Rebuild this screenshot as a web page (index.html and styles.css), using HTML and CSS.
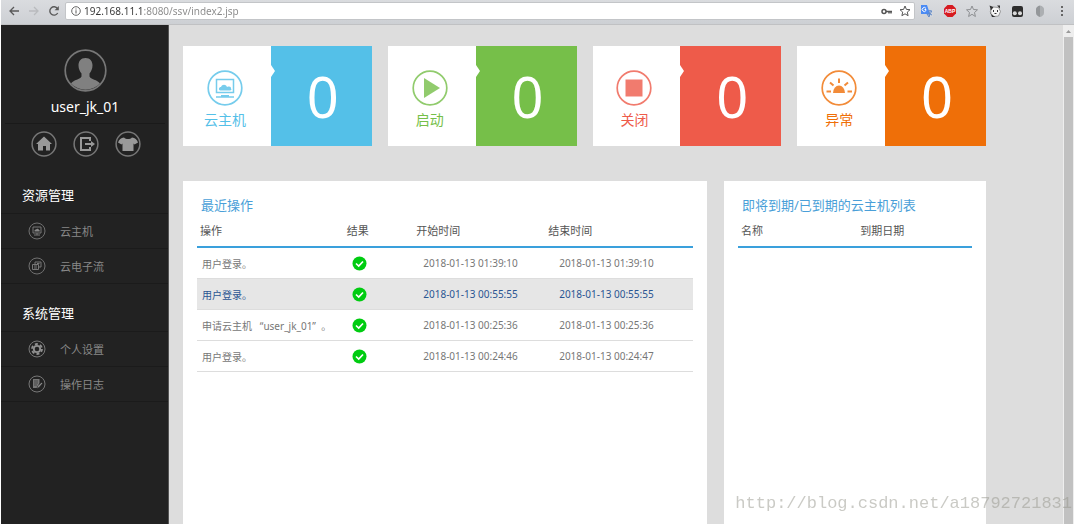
FILE: index.html
```html
<!DOCTYPE html>
<html lang="zh-CN">
<head>
<meta charset="utf-8">
<title>云主机管理</title>
<link rel="stylesheet" href="styles.css">
</head>
<body>
<header class="browser">
  <div class="nav-buttons">
    <button aria-label="后退"><svg width="12" height="12" viewBox="0 0 12 12"><path d="M11 6H2M6 2L2 6l4 4" fill="none" stroke="#5a5a5a" stroke-width="1.3"/></svg></button>
    <button aria-label="前进"><svg width="12" height="12" viewBox="0 0 12 12"><path d="M1 6h9M6 2l4 4-4 4" fill="none" stroke="#b9bbbe" stroke-width="1.3"/></svg></button>
    <button aria-label="刷新"><svg width="12" height="12" viewBox="0 0 12 12"><path d="M9.7 8A4.2 4.2 0 1 1 9.5 3.6" fill="none" stroke="#5a5a5a" stroke-width="1.4"/><path d="M10.8 1v4.2H6.6z" fill="#5a5a5a"/></svg></button>
  </div>
  <div class="address">
    <svg width="10" height="10" viewBox="0 0 10 10"><circle cx="5" cy="5" r="4.3" fill="none" stroke="#666"/><path d="M5 4.3v3.2M5 2.4v1.1" stroke="#666" stroke-width="1.1"/></svg>
    <input class="url" type="text" aria-label="地址" value="192.168.11.1:8080/ssv/index2.jsp">
    <button aria-label="密码"><svg width="11" height="11" viewBox="0 0 11 11"><circle cx="3" cy="5.5" r="2" fill="none" stroke="#555" stroke-width="1.5"/><path d="M5 5.5h6M8 5.5v2M10 5.5v2" stroke="#555" stroke-width="1.5"/></svg></button>
    <button aria-label="收藏"><svg width="12" height="12" viewBox="0 0 12 12"><path d="M6 1l1.4 3.4 3.6.3-2.7 2.4.8 3.6L6 8.8l-3.1 1.9.8-3.6L1 4.700l3.600-.3z" fill="none" stroke="#555"/></svg></button>
  </div>
  <div class="extensions">
    <button aria-label="翻译"><svg width="14" height="14" viewBox="0 0 14 14"><path d="M5 4h8v9H8z" fill="#d4d7dc"/><path d="M1 1h6l3 9H1z" fill="#4b8bf4"/><path d="M6 4.500A2 2 0 1 0 6 6.500V5.500H4.500" fill="none" stroke="#fff"/><path d="M8 7h4M10 6v1M11.500 7c-.5 2-1.500 3-3 4M9 8c.5 1.500 1.500 2.500 3 3M7 10l2 3 1-3z" fill="none" stroke="#5d87c9"/></svg></button>
    <button aria-label="ABP"><svg width="14" height="14" viewBox="0 0 14 14"><path d="M4.500 1h5L13 4.500v5L9.500 13h-5L1 9.500v-5z" fill="#d61a20"/><text x="7" y="9" text-anchor="middle" class="abp">ABP</text></svg></button>
    <button aria-label="书签"><svg width="14" height="14" viewBox="0 0 14 14"><path d="M7 2l1.500 3.500 4 .3-3 2.700.9 4L7 10.300l-3.400 2.200.9-4-3-2.700 4-.3z" fill="none" stroke="#8d8f92"/></svg></button>
    <button aria-label="猫"><svg width="14" height="14" viewBox="0 0 14 14"><path d="M2.500 5l3-2 5 .5 2 4-2 4.500-5 .5-2.500-3z" fill="#f5f5f5" stroke="#777" stroke-width=".7"/><path d="M1.500 1.500l4 1.500L3 6.500zM9 1.500h3v3zM1.500 7l2 3.500 4 2.500H4z" fill="#333"/><path d="M5.500 6v2M9.500 6v2M6.500 9.500h2" stroke="#333"/></svg></button>
    <button aria-label="脚本"><svg width="14" height="14" viewBox="0 0 14 14"><rect x="2" y="2" width="11" height="11" rx="2" fill="#2d2d2d"/><circle cx="4.800" cy="9.300" r="2" fill="#d9d9d9"/><circle cx="10" cy="9.300" r="2" fill="#d9d9d9"/></svg></button>
    <button aria-label="盾牌"><svg width="14" height="14" viewBox="0 0 14 14"><path d="M7 1.500C4.500 2 3 3.500 3 5v4c0 2 2 3.500 4 4z" fill="#94979a"/><path d="M7 1.500c2.500.5 4 2 4 3.500v4c0 2-2 3.500-4 4z" fill="#acafb2"/></svg></button>
    <button aria-label="菜单"><svg width="14" height="14" viewBox="0 0 14 14"><path d="M6 2h2v2H6zM6 6h2v2H6zM6 10h2v2H6z" fill="#666"/></svg></button>
  </div>
</header>

<div class="page">
  <aside class="sidebar">
    <div class="profile">
      <svg width="43" height="43" viewBox="0 0 43 43"><circle cx="21.500" cy="21.500" r="20.300" fill="none" stroke="#777" stroke-width="1.700"/><path d="M21.500 9c4.800 0 7 3.500 7 7.500 0 3.500-1.500 6-3 8v3c1 3 8 3 10.500 7A20 20 0 0 1 7 34.500c2.500-4 9.500-4 10.500-7v-3c-1.500-2-3-4.500-3-8 0-4 2.200-7.500 7-7.500z" fill="#808080"/></svg>
      <p class="username">user_jk_01</p>
    </div>
    <div class="shortcuts">
      <button aria-label="主页"><svg width="26" height="26" viewBox="0 0 26 26"><circle cx="13" cy="13" r="11.900" fill="none" stroke="#777" stroke-width="1.500"/><path d="M13 5.500l8 7.500h-2v6.500h-4V15h-3v4.500H7V13H5z" fill="#999"/></svg></button>
      <button aria-label="退出"><svg width="26" height="26" viewBox="0 0 26 26"><circle cx="13" cy="13" r="11.900" fill="none" stroke="#777" stroke-width="1.500"/><path d="M17 10V7H8v12h9v-3M12 13h7" fill="none" stroke="#999" stroke-width="2"/><path d="M18 10l4 3-4 3z" fill="#999"/></svg></button>
      <button aria-label="换肤"><svg width="26" height="26" viewBox="0 0 26 26"><circle cx="13" cy="13" r="11.900" fill="none" stroke="#777" stroke-width="1.500"/><path d="M9 6.500c2 2 6 2 8 0 3 .5 5 2 6 5l-3.500 2-1-1v7.500h-11V12.500l-1 1-3.500-2c1-3 3-4.500 6-5z" fill="#999"/></svg></button>
    </div>
    <nav class="menu">
      <section class="menu-group">
        <h2>资源管理</h2>
        <a href="#"><svg width="18" height="18" viewBox="0 0 18 18"><circle cx="9" cy="9" r="8" fill="none" stroke="#707070"/><path d="M5 5h8v6H5zM6 13h6M9 11v2" fill="none" stroke="#777"/><path d="M6.500 9.500c-.5-1.500 1-2 1.500-2 1-1.500 3-.5 3 .5 1 .2 1 1.500.5 1.500z" fill="#888"/></svg>云主机</a>
        <a href="#"><svg width="18" height="18" viewBox="0 0 18 18"><circle cx="9" cy="9" r="8" fill="none" stroke="#707070"/><path d="M7 5h6v5h-2M7 5v2M4.500 7.500h6v5h-6zM6 9h3M6 11h3M9 6.500h2.500" fill="none" stroke="#777"/></svg>云电子流</a>
      </section>
      <section class="menu-group">
        <h2>系统管理</h2>
        <a href="#"><svg width="18" height="18" viewBox="0 0 18 18"><circle cx="9" cy="9" r="8" fill="none" stroke="#777"/><circle cx="9" cy="9" r="3.200" fill="none" stroke="#909090" stroke-width="1.800"/><circle cx="9" cy="9" r="5" fill="none" stroke="#909090" stroke-width="1.800" stroke-dasharray="3 2.200"/></svg>个人设置</a>
        <a href="#"><svg width="18" height="18" viewBox="0 0 18 18"><circle cx="9" cy="9" r="8" fill="none" stroke="#777"/><path d="M5 4h6.500v4L9 13H5z" fill="#777"/><path d="M6 6h4M6 8h4M6 10h3" stroke="#333" stroke-width=".7"/><path d="M9 13.500l.5-2.500 4-3.500 1 1-3.500 4z" fill="#8a8a8a" stroke="#222" stroke-width=".5"/></svg>操作日志</a>
      </section>
    </nav>
  </aside>

  <main class="content">
    <div class="cards">
      <article class="card blue">
        <div class="card-label"><svg width="36" height="36" viewBox="0 0 36 36"><circle cx="18" cy="18" r="16.800" fill="none" stroke="currentColor" stroke-width="1.700"/><path d="M9.500 9.500h17v13h-17zM9 27h18" fill="none" stroke="currentColor" stroke-width="1.500"/><path d="M14 25h8v2h-8zM13 20.500c-2-1-1-3.500 1-3.500 1-3 5-3 6 0 3-1 4 0 4 1.500 1 1 0 2-1 2z" fill="currentColor"/></svg><span>云主机</span></div>
        <strong>0</strong>
      </article>
      <article class="card green">
        <div class="card-label"><svg width="36" height="36" viewBox="0 0 36 36"><circle cx="18" cy="18" r="16.800" fill="none" stroke="currentColor" stroke-width="1.700"/><path d="M12 8l16 10-16 10z" fill="currentColor"/></svg><span>启动</span></div>
        <strong>0</strong>
      </article>
      <article class="card red">
        <div class="card-label"><svg width="36" height="36" viewBox="0 0 36 36"><circle cx="18" cy="18" r="16.800" fill="none" stroke="currentColor" stroke-width="1.700"/><path d="M9.500 9.500h17v17h-17z" fill="currentColor"/></svg><span>关闭</span></div>
        <strong>0</strong>
      </article>
      <article class="card orange">
        <div class="card-label"><svg width="36" height="36" viewBox="0 0 36 36"><circle cx="18" cy="18" r="16.800" fill="none" stroke="currentColor" stroke-width="1.700"/><path d="M12 23a6 7.500 0 0 1 12 0z" fill="currentColor"/><path d="M5.500 21.500h4.500M26.500 21.500H31M9 12.500l3.500 3M27 12.500l-3.500 3M18 8.500v4.500" stroke="currentColor" stroke-width="2"/></svg><span>异常</span></div>
        <strong>0</strong>
      </article>
    </div>

    <div class="panels">
      <section class="panel">
        <h3>最近操作</h3>
        <table class="operations">
          <thead><tr><th>操作</th><th>结果</th><th>开始时间</th><th>结束时间</th></tr></thead>
          <tbody>
            <tr><td>用户登录。</td><td><svg width="15" height="15" viewBox="0 0 15 15" role="img" aria-label="成功"><circle cx="7.500" cy="7.500" r="7" fill="#0c1"/><path d="M4 7.500l2.700 2.500L11 5.500" fill="none" stroke="#fff" stroke-width="1.700"/></svg></td><td>2018-01-13 01:39:10</td><td>2018-01-13 01:39:10</td></tr>
            <tr class="selected"><td>用户登录。</td><td><svg width="15" height="15" viewBox="0 0 15 15" role="img" aria-label="成功"><circle cx="7.500" cy="7.500" r="7" fill="#0c1"/><path d="M4 7.500l2.700 2.500L11 5.500" fill="none" stroke="#fff" stroke-width="1.700"/></svg></td><td>2018-01-13 00:55:55</td><td>2018-01-13 00:55:55</td></tr>
            <tr><td>申请云主机 &nbsp; “user_jk_01” &nbsp;。</td><td><svg width="15" height="15" viewBox="0 0 15 15" role="img" aria-label="成功"><circle cx="7.500" cy="7.500" r="7" fill="#0c1"/><path d="M4 7.500l2.700 2.500L11 5.500" fill="none" stroke="#fff" stroke-width="1.700"/></svg></td><td>2018-01-13 00:25:36</td><td>2018-01-13 00:25:36</td></tr>
            <tr><td>用户登录。</td><td><svg width="15" height="15" viewBox="0 0 15 15" role="img" aria-label="成功"><circle cx="7.500" cy="7.500" r="7" fill="#0c1"/><path d="M4 7.500l2.700 2.500L11 5.500" fill="none" stroke="#fff" stroke-width="1.700"/></svg></td><td>2018-01-13 00:24:46</td><td>2018-01-13 00:24:47</td></tr>
          </tbody>
        </table>
      </section>
      <section class="panel">
        <h3>即将到期/已到期的云主机列表</h3>
        <table class="expiring">
          <thead><tr><th>名称</th><th>到期日期</th></tr></thead>
        </table>
      </section>
    </div>
  </main>

  <div class="scrollbar">
    <svg width="11" height="12" viewBox="0 0 11 12"><path d="M3 8l2.500-3L8 8z" fill="#999"/></svg>
    <div class="thumb"></div>
  </div>
</div>
<div class="watermark">http://blog.csdn.net/a18792721831</div>
</body>
</html>
```

FILE: styles.css
```css
* { box-sizing: border-box; }

body {
  display: flex;
  flex-direction: column;
  min-height: 100vh;
  margin: 0;
  padding: 0 4px 0 1px;
  background: #fff;
  font-family: "Noto Sans", "Noto Sans CJK SC", sans-serif;
  font-size: 10px;
}

h2, h3, p { margin: 0; font-weight: 400; }

svg { display: block; flex: none; }

button {
  padding: 0;
  border: 0;
  background: none;
}

/* Browser toolbar */
.browser {
  display: flex;
  height: 25px;
  padding: 2px 5px 4px 7px;
  background: linear-gradient(#dadcdf, #cdd0d4);
  border-bottom: 1px solid #c0c1c3;
}

.nav-buttons {
  display: flex;
  align-items: center;
  gap: 8px;
  width: 57px;
}

.address {
  display: flex;
  flex: 1;
  align-items: center;
  gap: 7px;
  padding: 0 3px 0 5px;
  background: #fff;
  border: 1px solid #c3c5c8;
  border-radius: 2px;
}

.url {
  flex: 1;
  min-width: 0;
  margin-left: -4px;
  padding: 0;
  border: 0;
  outline: 0;
  font: 10px/16px "Noto Sans", sans-serif;
  color: transparent;
  background: linear-gradient(90deg, #333 58px, #888 58px);
  -webkit-background-clip: text;
  background-clip: text;
}

.extensions {
  display: flex;
  align-items: center;
  justify-content: space-between;
  width: 149px;
  margin-left: 5px;
}

.abp {
  fill: #fff;
  font: bold 5px "Liberation Sans", sans-serif;
}

/* Page */
.page {
  display: flex;
  flex: 1;
  background: #ddd;
}

.sidebar {
  flex: none;
  width: 168px;
  padding-top: 24px;
  background: #222;
  border-right: 1px solid #555;
}

.profile {
  display: flex;
  flex-direction: column;
  align-items: center;
  margin: 0 3px 0 4px;
  height: 75px;
  border-bottom: 1px solid #1a1a1a;
}

.username {
  margin-top: 4px;
  font-size: 14px;
  line-height: 22px;
  color: #fff;
}

.shortcuts {
  display: flex;
  justify-content: center;
  gap: 16px;
  padding: 7px 0 21px 3px;
}

.menu {
  display: flex;
  flex-direction: column;
  gap: 12px;
}

.menu-group h2 {
  padding-left: 21px;
  font-size: 13px;
  line-height: 35px;
  color: #fff;
  border-bottom: 1px solid #1b1b1b;
}

.menu-group a {
  display: flex;
  align-items: center;
  gap: 14px;
  height: 35px;
  padding-left: 27px;
  font-size: 11px;
  color: #888;
  text-decoration: none;
  border-bottom: 1px solid #1b1b1b;
}

.content {
  display: flex;
  flex: 1;
  flex-direction: column;
  gap: 35px;
  padding: 21px 77px 0 14px;
}

.cards {
  display: grid;
  grid-template-columns: repeat(4, 1fr);
  gap: 16px;
}

.card {
  display: grid;
  grid-template-columns: 88fr 101fr;
  height: 100px;
  background: #fff;
}

.card-label {
  display: flex;
  flex-direction: column;
  align-items: center;
  gap: 3px;
  padding: 24px 4px 0 0;
  font-size: 14px;
  line-height: 22px;
}

.card-label svg { opacity: 0.8; }

.card strong {
  position: relative;
  padding-left: 3px;
  font-size: 56px;
  font-weight: 400;
  line-height: 100px;
  text-align: center;
  color: #fff;
}

.card strong::before {
  content: "";
  position: absolute;
  top: 19px;
  left: 0;
  border: 6px solid transparent;
  border-left: 4px solid #fff;
  border-right: 0;
}

.blue { color: #54c0e8; }
.blue strong { background: #54c0e8; }
.green { color: #76bf49; }
.green strong { background: #76bf49; }
.red { color: #ee5b4a; }
.red strong { background: #ee5b4a; }
.orange { color: #ef6f08; }
.orange strong { background: #ef6f08; }

.panels {
  display: grid;
  flex: 1;
  grid-template-columns: 2fr 1fr;
  gap: 17px;
}

.panel {
  padding: 14px 14px 0;
  background: #fff;
}

.panel h3 {
  padding: 0 4px;
  font-size: 13px;
  line-height: 21px;
  color: #4a9fd8;
}

table {
  width: 100%;
  table-layout: fixed;
  border-collapse: separate;
  border-spacing: 0;
}

th {
  height: 32px;
  padding: 0 0 2px 3px;
  font-size: 11px;
  font-weight: 400;
  text-align: left;
  color: #555;
  border-bottom: 2px solid #3aa0dc;
}

td {
  height: 31px;
  padding: 0 0 0 5px;
  white-space: nowrap;
  color: #777;
  border-bottom: 1px solid #ddd;
}

.operations th:nth-child(1) { width: 29.6%; }
.operations th:nth-child(2) { width: 14%; }
.operations th:nth-child(3) { width: 26.6%; }
.operations td:nth-child(2) { padding-left: 8px; }
.operations td:nth-child(3) { padding-left: 10px; }
.operations td:nth-child(4) { padding-left: 14px; }
.expiring th:nth-child(1) { width: 51%; }

.selected td {
  color: #2a5592;
  background: #e6e6e6;
}

.scrollbar {
  display: flex;
  flex: none;
  flex-direction: column;
  width: 11px;
  background: #eee;
}

.thumb {
  flex: 1;
  margin: 0 1px;
  background: #c1c1c1;
}

.watermark {
  position: fixed;
  right: 6px;
  bottom: 8px;
  font: 17px/24px "Liberation Mono", monospace;
  color: rgba(150, 150, 140, 0.5);
  pointer-events: none;
}
```
